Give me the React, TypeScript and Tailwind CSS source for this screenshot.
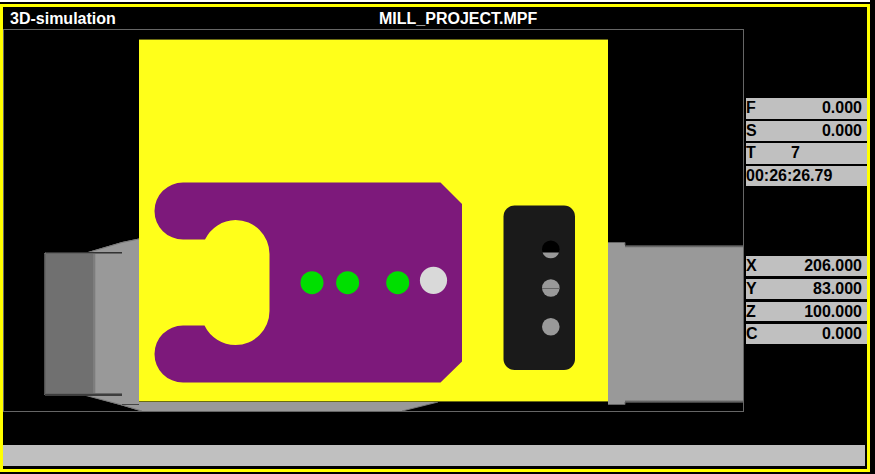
type Reading = { label: string; value: string; align?: "left" };

const process: Reading[] = [
  { label: "F", value: "0.000" },
  { label: "S", value: "0.000" },
  { label: "T", value: "7", align: "left" },
];

const axes: Reading[] = [
  { label: "X", value: "206.000" },
  { label: "Y", value: "83.000" },
  { label: "Z", value: "100.000" },
  { label: "C", value: "0.000" },
];

function Row({ label, value, align }: Reading) {
  return (
    <div className="flex bg-[#c0c0c0] pr-[5px]">
      <dt className="w-[45px]">{label}</dt>
      <dd className={align === "left" ? "flex-1" : "flex-1 text-right"}>{value}</dd>
    </div>
  );
}

function Scene() {
  return (
    <svg
      viewBox="4 30 739 381"
      className="block w-full"
      role="img"
      aria-label="Machined workpiece seen from above"
    >
      <defs>
        <linearGradient id="band" x1="0" y1="0" x2="0" y2="1">
          <stop offset="0" stopColor="#333333" />
          <stop offset="0.018" stopColor="#999999" />
          <stop offset="0.98" stopColor="#999999" />
          <stop offset="1" stopColor="#333333" />
        </linearGradient>
        <linearGradient id="edge" x1="0" y1="0" x2="1" y2="0">
          <stop offset="0" stopColor="#444444" />
          <stop offset="1" stopColor="#707070" />
        </linearGradient>
      </defs>

      {/* clamp and chuck */}
      <path d="M88 252L122 242L139 238.500H200V402H438L400 411.500H142L122 405.500L84 395Z" fill="#999999" />
      <path d="M88 252.500L122 242.500M122 242.500L139 239M84 395L122 405L142 411M438 402L402 411" fill="none" stroke="#777777" />
      <path d="M46 252H122V396H46L44 394V254Z" fill="#999999" />
      <path d="M46 252H93V396H46L44 394V254Z" fill="#707070" />
      <rect x="93" y="253" width="2" height="142" fill="#7d7d7d" />
      <rect x="95" y="253" width="1" height="142" fill="#909090" />
      <rect x="44" y="254" width="2" height="140" fill="url(#edge)" />
      <path d="M46 252H122V253H45Z" fill="#333333" />
      <rect x="46" y="253" width="76" height="1" fill="#626262" />
      <rect x="46" y="393" width="76" height="1" fill="#666666" />
      <rect x="45" y="394" width="77" height="2" fill="#3d3d3d" />
      <rect x="122" y="404" width="17" height="1" fill="#444444" />
      <rect x="625" y="245" width="118" height="158" fill="url(#band)" />
      <rect x="608" y="243" width="17" height="162" fill="#999999" />
      <path d="M608 242.500H625V245M608 404.500H625V402" fill="none" stroke="#666666" />

      {/* stock */}
      <rect x="139" y="39" width="469" height="363" fill="#6b6b10" />
      <rect x="139" y="40" width="469" height="361" fill="#ffff1a" />

      {/* milled contour */}
      <path
        d="M183 182.500H440.500L462 204V361.500L440.500 382.500H183A28.500 28.500 0 0 1 183 325.500H204.500A34.500 34.500 0 0 0 235.500 345A34 34 0 0 0 269.500 311V254A34 34 0 0 0 235.500 220A34.500 34.500 0 0 0 205 239.500H183A28.500 28.500 0 0 1 183 182.500Z"
        fill="#7d197b"
      />

      {/* drilled holes */}
      <g fill="#00df00">
        <circle cx="312" cy="282.700" r="11.500" />
        <circle cx="347.600" cy="282.700" r="11.500" />
        <circle cx="397.700" cy="282.700" r="11.500" />
      </g>
      <circle cx="433.500" cy="280.300" r="13.600" fill="#d9d9d9" />

      {/* pocket */}
      <rect x="503.500" y="205.500" width="71.500" height="164.500" rx="11" fill="#1a1a1a" />
      <circle cx="550.800" cy="249.300" r="8.800" fill="#000000" />
      <path d="M542.500 252.500H559A8.800 8.800 0 0 1 542.500 252.500Z" fill="#999999" />
      <circle cx="550.800" cy="288" r="8.800" fill="#999999" />
      <path d="M542 288.500H559.500" stroke="#666666" />
      <circle cx="550.800" cy="326.700" r="8.800" fill="#999999" />
    </svg>
  );
}

export default function App() {
  return (
    <div className="flex min-h-screen flex-col bg-black pr-[5px] pb-[2px] font-['Liberation_Sans',Arial,sans-serif] text-base leading-5 font-bold">
      <div className="mb-[2px] h-[2px] bg-white" />
      <main className="flex flex-1 flex-col border-3 border-[#ffff00] pb-[3px]">
        <header className="flex h-[22px] items-end pl-[7px] text-white">
          <h1 className="w-[369px]">3D-simulation</h1>
          <h2>MILL_PROJECT.MPF</h2>
        </header>
        <div className="flex items-start">
          <section className="min-w-0 flex-1 border border-[#666666]">
            <Scene />
          </section>
          <aside className="w-[123px] pt-[69px] pl-[2px] text-black">
            <div className="grid h-[88px] grid-rows-4 gap-[2px]">
              <dl className="row-span-3 grid grid-rows-subgrid">
                {process.map((r) => (
                  <Row key={r.label} {...r} />
                ))}
              </dl>
              <time className="bg-[#c0c0c0]">00:26:26.79</time>
            </div>
            <dl className="mt-[70px] grid h-[88px] grid-rows-4 gap-[3px]">
              {axes.map((r) => (
                <Row key={r.label} {...r} />
              ))}
            </dl>
          </aside>
        </div>
        <footer className="mt-auto mr-[2px] h-[21px] bg-[#c0c0c0]" />
      </main>
    </div>
  );
}
